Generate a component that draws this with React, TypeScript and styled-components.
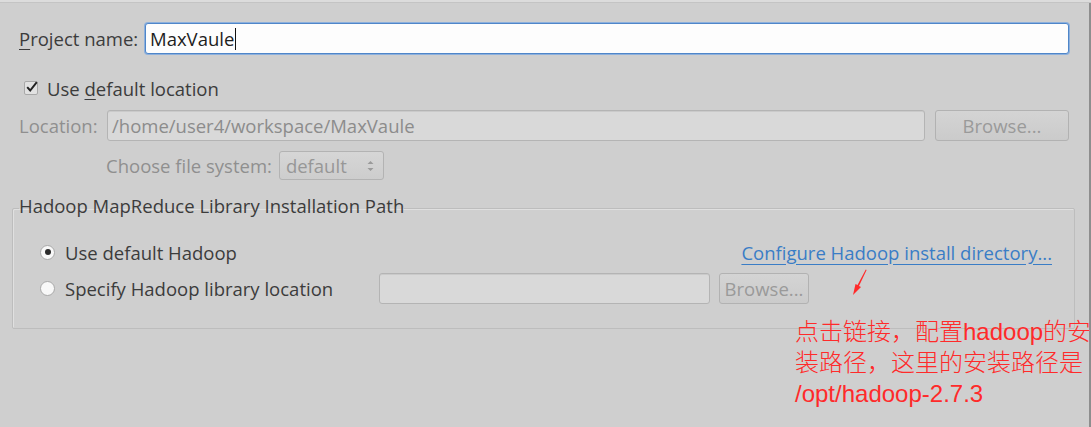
import React from "react";
import styled, { createGlobalStyle } from "styled-components";

const Global = createGlobalStyle`
  html, body { margin: 0; padding: 0; background: #cfcfcf; }
  body { font-family: "Open Sans", "Noto Sans", sans-serif; }
`;

const Frame = styled.div`
  position: relative;
  width: 1091px;
  height: 427px;
  box-sizing: border-box;
  background: #cfcfcf;
  border-top: 2px solid #dcdcdc;
  box-shadow: inset 0 1px 0 #c4c4c4, inset -2px 0 0 #8e8e8e, inset -1px 0 0 #d6d6d6;
  overflow: hidden;
`;

const Content = styled.div`
  display: flex;
  flex-direction: column;
  padding: 21px 0 0 19px;
  width: 1069px;
  box-sizing: border-box;
  font-size: 18.5px;
  color: #3c3c3c;
`;

const Row = styled.div<{ $mt?: number; $h: number; $pl?: number }>`
  display: flex;
  align-items: center;
  height: ${(p) => p.$h}px;
  margin-top: ${(p) => p.$mt ?? 0}px;
  padding-left: ${(p) => p.$pl ?? 0}px;
`;

const Label = styled.span<{ $w?: number; $disabled?: boolean }>`
  flex: none;
  width: ${(p) => (p.$w ? `${p.$w}px` : "auto")};
  color: ${(p) => (p.$disabled ? "#8f8f8f" : "#3c3c3c")};
  white-space: nowrap;
`;

const Mn = styled.span`
  text-decoration: underline;
  text-underline-offset: 3px;
`;

const TextInput = styled.div<{ $focus?: boolean; $disabled?: boolean; $w?: number }>`
  flex: ${(p) => (p.$w ? "none" : "1")};
  width: ${(p) => (p.$w ? `${p.$w}px` : "auto")};
  height: 31px;
  box-sizing: border-box;
  display: flex;
  align-items: center;
  padding-left: 4px;
  border-radius: 3px;
  background: ${(p) => (p.$focus ? "#fdfdfd" : "#d9d9d9")};
  border: 1px solid ${(p) => (p.$focus ? "#4f86c9" : "#b4b4b4")};
  box-shadow: ${(p) => (p.$focus ? "0 0 0 1px #8db0dc" : "inset 0 1px 0 #cacaca")};
  color: ${(p) => (p.$disabled ? "#8c8c8c" : "#1e1e1e")};
  white-space: nowrap;
`;

const Caret = styled.span`
  display: inline-block;
  width: 1px;
  height: 22px;
  background: #111;
  margin-left: 1px;
`;

const Button = styled.div<{ $w: number; $ml: number }>`
  flex: none;
  width: ${(p) => p.$w}px;
  margin-left: ${(p) => p.$ml}px;
  height: 31px;
  box-sizing: border-box;
  border: 1px solid #b2b2b2;
  border-radius: 3px;
  background: linear-gradient(#d4d4d4, #cbcbcb);
  display: flex;
  align-items: center;
  justify-content: center;
  color: #9a9a9a;
`;

const Check = styled.span`
  flex: none;
  width: 14px;
  height: 14px;
  box-sizing: border-box;
  border: 1px solid #a9a9a9;
  border-radius: 2px;
  background: #e2e2e2;
  margin: 0 9px 0 5px;
  position: relative;
  display: inline-flex;
`;

const Combo = styled.div`
  flex: none;
  width: 105px;
  height: 29px;
  margin-left: 7px;
  box-sizing: border-box;
  border: 1px solid #b3b3b3;
  border-radius: 3px;
  background: linear-gradient(#d6d6d6, #cdcdcd);
  display: flex;
  align-items: center;
  justify-content: space-between;
  padding: 0 9px 0 6px;
  color: #979797;
`;

const Group = styled.fieldset`
  margin: 16px 0 0 -7px;
  width: 1063px;
  box-sizing: border-box;
  border: 1px solid #bdbdbd;
  border-radius: 2px;
  box-shadow: 1px 1px 0 #e0e0e0 inset;
  padding: 0 22px 24px 6px;
`;

const Legend = styled.legend`
  padding: 0 0 4px 0;
  line-height: 20px;
  color: #3c3c3c;
`;

const GroupBody = styled.div`
  display: flex;
  flex-direction: column;
  padding-left: 21px;
`;

const Radio = styled.span<{ $on?: boolean }>`
  flex: none;
  width: 15px;
  height: 15px;
  box-sizing: border-box;
  border-radius: 50%;
  border: 1px solid #a8a8a8;
  background: #f8f8f8;
  margin-right: 10px;
  display: flex;
  align-items: center;
  justify-content: center;
  &::after {
    content: "";
    display: ${(p) => (p.$on ? "block" : "none")};
    width: 6px;
    height: 6px;
    border-radius: 50%;
    background: #2b2b2b;
  }
`;

const Link = styled.span`
  margin-left: auto;
  color: #3a7dc6;
  text-decoration: underline;
  text-underline-offset: 4px;
`;

const Note = styled.div`
  position: absolute;
  left: 795px;
  top: 314px;
  width: 300px;
  font-family: "Liberation Sans", "Noto Sans CJK SC", sans-serif;
  font-weight: 300;
  font-size: 24px;
  line-height: 31px;
  color: #ff2a2a;
  white-space: pre;
`;

const Arrow = styled.svg`
  position: absolute;
  left: 848px;
  top: 264px;
`;

export default function App() {
  return (
    <>
      <Global />
      <Frame>
        <Content>
          <Row $h={31}>
            <Label $w={126}>
              <Mn>P</Mn>roject name:
            </Label>
            <TextInput $focus>
              MaxVaule
              <Caret />
            </TextInput>
          </Row>
          <Row $h={20} $mt={24}>
            <Check>
              <svg width="14" height="14" viewBox="0 0 14 14" style={{ position: "absolute", left: 0, top: -2 }}>
                <path d="M2.2 7.2 L5.2 10.5 L11.8 2.2" fill="none" stroke="#222" strokeWidth="2" />
              </svg>
            </Check>
            <Label>
              Use <Mn>d</Mn>efault location
            </Label>
          </Row>
          <Row $h={31} $mt={12}>
            <Label $w={88} $disabled>
              Location:
            </Label>
            <TextInput $disabled>/home/user4/workspace/MaxVaule</TextInput>
            <Button $w={134} $ml={10}>
              Browse...
            </Button>
          </Row>
          <Row $h={29} $mt={10} $pl={87}>
            <Label $disabled>Choose file system:</Label>
            <Combo>
              <span>default</span>
              <svg width="7" height="14" viewBox="0 0 7 14">
                <path d="M0.5 5 L3.5 2 L6.5 5 Z M0.5 9 L3.5 12 L6.5 9 Z" fill="#9a9a9a" />
              </svg>
            </Combo>
          </Row>
          <Group>
            <Legend>Hadoop MapReduce Library Installation Path</Legend>
            <GroupBody>
              <Row $h={20} $mt={22}>
                <Radio $on />
                <Label>Use default Hadoop</Label>
                <Link>Configure Hadoop install directory...</Link>
              </Row>
              <Row $h={31} $mt={11}>
                <Radio />
                <Label $w={314}>Specify Hadoop library location</Label>
                <TextInput $w={331} $disabled />
                <Button $w={90} $ml={9}>
                  Browse...
                </Button>
              </Row>
            </GroupBody>
          </Group>
        </Content>
        <Arrow width="24" height="34" viewBox="0 0 24 34">
          <path d="M18.6 4 L17.8 3.6 L9.5 19 L7.5 18 L5 29 L13 21 L11 20 Z" fill="#ff2a2a" />
        </Arrow>
        <Note>{"点击链接，配置hadoop的安\n装路径，这里的安装路径是\n/opt/hadoop-2.7.3"}</Note>
      </Frame>
    </>
  );
}
